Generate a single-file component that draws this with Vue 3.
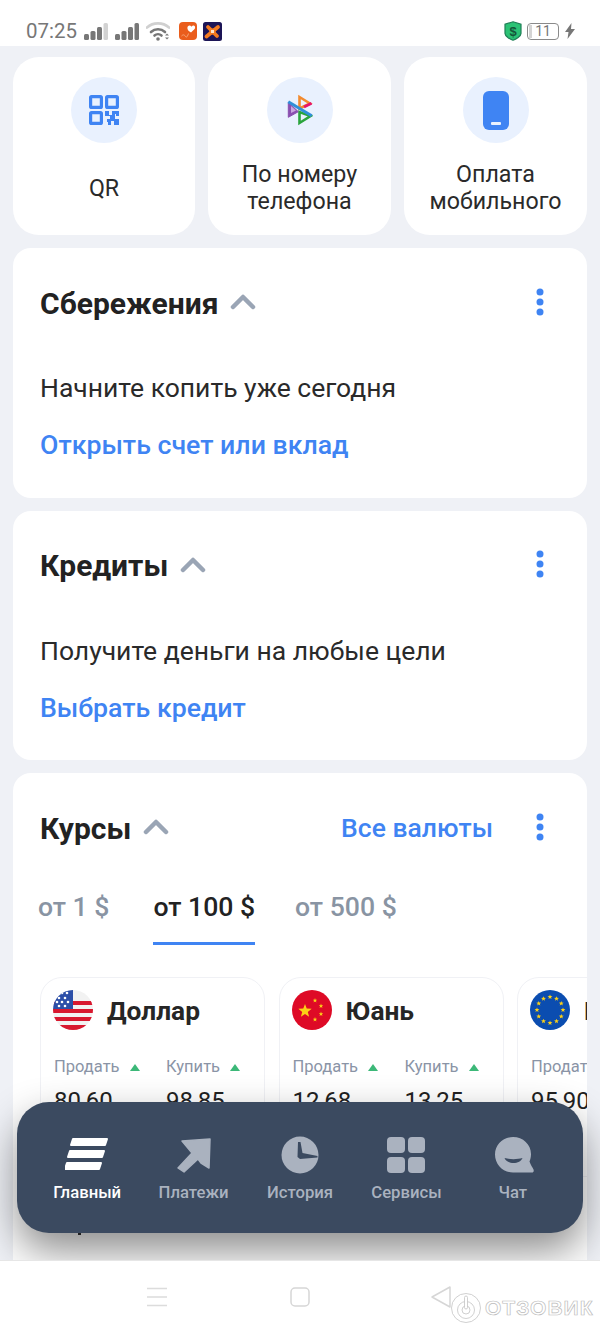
<script setup>
const star = (cx, cy, r) => {
  const pts = []
  for (let i = 0; i < 10; i++) {
    const a = -Math.PI / 2 + (i * Math.PI) / 5
    const q = i % 2 ? r * 0.42 : r
    pts.push(`${(cx + q * Math.cos(a)).toFixed(2)},${(cy + q * Math.sin(a)).toFixed(2)}`)
  }
  return pts.join(' ')
}
const euStars = Array.from({ length: 12 }, (_, i) => {
  const a = (i * Math.PI) / 6
  return star(20 + 13 * Math.cos(a), 20 + 13 * Math.sin(a), 2.6)
})
const cnStars = [star(13, 21, 7), star(23, 10.5, 2.4), star(29, 16, 2.4), star(29, 24, 2.4), star(23, 29.5, 2.4)]
const usStars = [[4, 5], [9, 3], [14, 3], [6, 8], [12, 8], [4, 12], [9, 12], [15, 12], [6, 16], [12, 16]]

const promos = [
  { title: 'Сбережения', text: 'Начните копить уже сегодня', link: 'Открыть счет или вклад' },
  { title: 'Кредиты', text: 'Получите деньги на любые цели', link: 'Выбрать кредит' }
]
const tabs = [
  { label: 'от 1 $' },
  { label: 'от 100 $', active: true },
  { label: 'от 500 $' }
]
const rates = [
  { key: 'us', name: 'Доллар', sell: '80,60', buy: '98,85' },
  { key: 'cn', name: 'Юань', sell: '12,68', buy: '13,25' },
  { key: 'eu', name: 'Евро', sell: '95,90', buy: '104,20' }
]
const navItems = [
  { key: 'home', label: 'Главный', active: true },
  { key: 'pay', label: 'Платежи' },
  { key: 'hist', label: 'История' },
  { key: 'serv', label: 'Сервисы' },
  { key: 'chat', label: 'Чат' }
]
</script>

<template>
  <div class="phone">
    <header class="status">
      <span class="time">07:25</span>
      <svg class="sig" width="24" height="18" viewBox="0 0 24 18">
        <rect x="0" y="12" width="5" height="6" rx="1.5" fill="#777" />
        <rect x="6.5" y="9" width="5" height="9" rx="1.5" fill="#777" />
        <rect x="13" y="5" width="5" height="13" rx="1.5" fill="#777" />
        <rect x="19.5" y="1" width="4.5" height="17" rx="1.5" fill="#d2d2d2" />
      </svg>
      <svg class="sig2" width="24" height="18" viewBox="0 0 24 18">
        <rect x="0" y="12" width="5" height="6" rx="1.5" fill="#777" />
        <rect x="6.5" y="9" width="5" height="9" rx="1.5" fill="#777" />
        <rect x="13" y="5" width="5" height="13" rx="1.5" fill="#777" />
        <rect x="19.5" y="1" width="4.5" height="17" rx="1.5" fill="#777" />
      </svg>
      <svg class="wifi" width="24" height="20" viewBox="0 0 24 20" fill="none">
        <path d="M1 6.5C7 1 17 1 23 6.5" stroke="#d0d0d0" stroke-width="2.6" stroke-linecap="round" />
        <path d="M5 11C9 7.3 15 7.3 19 11" stroke="#777" stroke-width="2.6" stroke-linecap="round" />
        <path d="M8.5 14.5C10.5 12.8 13.5 12.8 15.5 14.5" stroke="#777" stroke-width="2.6" stroke-linecap="round" />
        <circle cx="12" cy="18" r="1.8" fill="#777" />
        <path d="M19 14.5l2-2 2 2zM19 16.5l2 2 2-2z" fill="#777" />
      </svg>
      <svg class="app1" width="18" height="18" viewBox="0 0 18 18">
        <rect width="18" height="18" rx="4" fill="#ea5d1c" />
        <path d="M10.5 9.5C7.500 7.500 8 3.500 10.500 3.500c1 0 1.500.7 2 1.200.5-.5 1-1.200 2-1.200 2 0 2.500 3.500-.5 5l-2 2z" fill="#fff" />
        <path d="M2.500 14c2-2 3-1 4 .5s2 0 3-3" stroke="#f8b48c" stroke-width=".8" fill="none" />
      </svg>
      <svg class="app2" width="19" height="19" viewBox="0 0 19 19">
        <rect width="19" height="19" rx="2.500" fill="#1c1556" />
        <path d="M3.500 14.500L15 5M5 5l9 9" stroke="#f47b20" stroke-width="3.800" stroke-linecap="round" />
        <rect x="6.500" y="6.500" width="6" height="6" rx="1" fill="#f47b20" />
        <rect x="8" y="8" width="3" height="3" fill="#fde3c8" />
      </svg>
      <span class="grow"></span>
      <svg class="shield" width="18" height="20" viewBox="0 0 18 20">
        <path d="M9 .8l8 2.400v9.300c0 2.500-5 5.700-8 6.700-3-1-8-4.200-8-6.700V3.200z" fill="#2bc275" stroke="#1f7f56" stroke-width="1.200" />
        <text x="9" y="14.500" text-anchor="middle" class="shield-t">$</text>
      </svg>
      <span class="batt"><span class="batt-fill"></span>11</span>
      <svg class="bolt" width="10" height="16" viewBox="0 0 10 16">
        <path d="M6.500 0L0 9h3.500L2.500 16 10 6H6z" fill="#777" />
      </svg>
    </header>

    <main class="content">
      <section class="quick">
        <div class="q-card">
          <span class="q-circle">
            <svg width="30" height="30" viewBox="0 0 30 30" fill="none">
              <g stroke="#3f84f3" stroke-width="3.200">
                <rect x="1.600" y="1.600" width="10.800" height="10.800" rx="1" />
                <rect x="17.600" y="1.600" width="10.800" height="10.800" rx="1" />
                <rect x="1.600" y="17.600" width="10.800" height="10.800" rx="1" />
              </g>
              <path d="M16 16h4v4h3v-4h7v5h-3v-2h-1v5h4v6h-5v-4h-3v4h-3v-3h-1v-3h3v-3h-5z" fill="#3f84f3" />
            </svg>
          </span>
          <span class="q-label">QR</span>
        </div>
        <div class="q-card">
          <span class="q-circle">
            <svg width="26" height="32" viewBox="0 0 26 32" fill="none">
              <path d="M12.500 3L23 9.500 12.500 14.500z" stroke="#f28a2e" stroke-width="2.600" />
              <path d="M24.500 9.300L17 13" stroke="#e6136b" stroke-width="2.800" />
              <path d="M12.500 29L23.500 22 12.500 18z" stroke="#2aa43c" stroke-width="2.600" />
              <path d="M1.300 8.300v15l10-5.600z" fill="#8a4fb0" stroke="#8a4fb0" stroke-width="1" />
              <path d="M4 12v7l5-2.500z" fill="#c9a7e0" />
              <path d="M1.300 7.700l23.400 14" stroke="#2f8fd8" stroke-width="3" />
            </svg>
          </span>
          <span class="q-label">По номеру<br />телефона</span>
        </div>
        <div class="q-card">
          <span class="q-circle">
            <svg width="26" height="39" viewBox="0 0 26 39">
              <rect width="26" height="39" rx="6" fill="#3f84f3" />
              <rect x="8" y="31" width="10" height="3" rx="1" fill="#e9f1fe" />
            </svg>
          </span>
          <span class="q-label">Оплата<br />мобильного</span>
        </div>
      </section>

      <section v-for="p in promos" :key="p.title" class="card">
        <div class="head">
          <h2 class="title">{{ p.title }}</h2>
          <svg class="chev" width="26" height="18" viewBox="0 0 26 18" fill="none">
            <path d="M3 15L13 5l10 10" stroke="#9aa5b5" stroke-width="4.500" stroke-linecap="round" stroke-linejoin="round" />
          </svg>
          <span class="grow"></span>
          <svg class="dots" width="24" height="30" viewBox="0 0 24 30">
            <circle cx="12" cy="5" r="3.500" />
            <circle cx="12" cy="15" r="3.500" />
            <circle cx="12" cy="25" r="3.500" />
          </svg>
        </div>
        <p class="text">{{ p.text }}</p>
        <a class="link">{{ p.link }}</a>
      </section>

      <section class="card rates-card">
        <div class="head">
          <h2 class="title">Курсы</h2>
          <svg class="chev" width="26" height="18" viewBox="0 0 26 18" fill="none">
            <path d="M3 15L13 5l10 10" stroke="#9aa5b5" stroke-width="4.500" stroke-linecap="round" stroke-linejoin="round" />
          </svg>
          <span class="grow"></span>
          <a class="all">Все валюты</a>
          <svg class="dots" width="24" height="30" viewBox="0 0 24 30">
            <circle cx="12" cy="5" r="3.500" />
            <circle cx="12" cy="15" r="3.500" />
            <circle cx="12" cy="25" r="3.500" />
          </svg>
        </div>
        <div class="tabs">
          <span v-for="t in tabs" :key="t.label" class="tab" :class="{ on: t.active }">{{ t.label }}</span>
        </div>
        <div class="rates">
          <div v-for="r in rates" :key="r.key" class="rate">
            <div class="rate-top">
              <svg class="flag" width="40" height="40" viewBox="0 0 40 40">
                <template v-if="r.key === 'us'">
                  <rect width="40" height="40" fill="#f2f2f2" />
                  <rect y="11" width="40" height="4" fill="#d8182f" />
                  <rect y="19" width="40" height="4" fill="#d8182f" />
                  <rect y="27" width="40" height="4" fill="#d8182f" />
                  <rect y="35" width="40" height="5" fill="#d8182f" />
                  <rect width="20" height="19" fill="#2c4fa8" />
                  <circle v-for="(s, i) in usStars" :key="i" :cx="s[0]" :cy="s[1]" r="1.300" fill="#fff" />
                </template>
                <template v-else-if="r.key === 'cn'">
                  <rect width="40" height="40" fill="#de0a26" />
                  <polygon v-for="(s, i) in cnStars" :key="i" :points="s" fill="#fcd116" />
                </template>
                <template v-else>
                  <rect width="40" height="40" fill="#0b4db0" />
                  <polygon v-for="(s, i) in euStars" :key="i" :points="s" fill="#fcd116" />
                </template>
              </svg>
              <span class="rate-name">{{ r.name }}</span>
            </div>
            <div class="rate-cols">
              <div class="col">
                <span class="lbl">Продать<i class="up"></i></span>
                <span class="val">{{ r.sell }}</span>
              </div>
              <div class="col">
                <span class="lbl">Купить<i class="up"></i></span>
                <span class="val">{{ r.buy }}</span>
              </div>
            </div>
          </div>
        </div>
        <span class="tick"></span>
      </section>
    </main>

    <footer class="sysbar">
      <svg width="20" height="20" viewBox="0 0 20 20" stroke="#dcdcdc" stroke-width="1.500">
        <path d="M0 1.500h20M0 10h20M0 18.500h20" />
      </svg>
      <svg width="20" height="20" viewBox="0 0 20 20" fill="none" stroke="#d6d6d6" stroke-width="1.500">
        <rect x="1" y="1" width="18" height="18" rx="4" />
      </svg>
      <svg class="back" width="20" height="22" viewBox="0 0 20 22" fill="none" stroke="#d6d6d6" stroke-width="1.500" stroke-linejoin="round">
        <path d="M19 1v20L1 11z" />
      </svg>
    </footer>

    <nav class="nav">
      <div v-for="n in navItems" :key="n.key" class="nav-item" :class="{ on: n.active }">
        <svg class="nav-ico" width="44" height="38" viewBox="0 0 44 38">
          <g v-if="n.key === 'home'" fill="#fff" stroke="#fff" stroke-width="2" stroke-linejoin="round">
            <path d="M12 3h34l-2 6H10z" transform="translate(-4 0)" />
            <path d="M9 15h34l-2 6H7z" transform="translate(-4 0)" />
            <path d="M6 27h34l-2 6H4z" transform="translate(-4 0)" />
          </g>
          <path v-else-if="n.key === 'pay'" d="M10 5L38 3l-1 29-8-5-3-4L12 36 6 32 20 17z" fill="#aab2bf" stroke="#aab2bf" stroke-width="1.500" stroke-linejoin="round" />
          <g v-else-if="n.key === 'hist'">
            <circle cx="22" cy="19" r="18.500" fill="#aab2bf" />
            <path d="M20 6h2.500l2 11 15 3v1.500L22 23l-2.500-2z" fill="#3b4a60" />
          </g>
          <g v-else-if="n.key === 'serv'" fill="#aab2bf">
            <rect x="3" y="1" width="18" height="16" rx="4" />
            <rect x="24" y="1" width="17" height="16" rx="4" />
            <rect x="3" y="21" width="18" height="16" rx="4" />
            <rect x="24" y="21" width="17" height="16" rx="4" />
          </g>
          <g v-else>
            <path d="M22 1c10 0 18 7.500 18 17 0 3-.7 5.500-1.500 7.500 1 3 3 6 4 8 .6 1.500 0 3-1.500 3H22C12 36.500 4 28.500 4 18.500S12 1 22 1z" fill="#aab2bf" />
            <path d="M13.500 22c5 1.500 13 1.500 18 0-1 3-5 5-9 5s-8-2-9-5z" fill="#3b4a60" />
          </g>
        </svg>
        <span class="nav-lbl">{{ n.label }}</span>
      </div>
    </nav>

    <div class="mark">
      <svg width="30" height="30" viewBox="0 0 30 30" fill="none" stroke="#c4c4c4" stroke-width=".8">
        <circle cx="15" cy="15" r="14.500" />
        <circle cx="15" cy="17" r="8.500" />
        <circle cx="15" cy="17" r="4" />
        <rect x="13.500" y="3" width="3" height="13" rx="1.500" fill="#fff" />
      </svg>
      <span class="mark-t">ОТЗОВИК</span>
    </div>
  </div>
</template>

<style scoped>
.phone {
  position: relative;
  width: 600px;
  height: 1333px;
  overflow: hidden;
  display: flex;
  flex-direction: column;
  background: #eff1f6;
  font-family: Roboto, "Noto Sans", sans-serif;
  color: #222;
}
.grow { flex: 1; }

.status {
  flex: none;
  height: 46px;
  background: #fff;
  display: flex;
  align-items: center;
  padding: 16px 25px 0 26px;
  box-sizing: border-box;
}
.time { font-size: 20.5px; color: #777; width: 50px; line-height: 1; margin-right: 8px; }
.sig { margin-right: 7px; }
.sig2 { margin-right: 7px; }
.wifi { margin-right: 9px; }
.app1 { margin-right: 6px; }
.shield { margin-right: 5px; }
.shield-t { font: 700 13px "Liberation Sans", sans-serif; fill: #14563a; }
.batt {
  position: relative;
  width: 32px;
  height: 17px;
  box-sizing: border-box;
  border: 1.500px solid #8a8a8a;
  border-radius: 4px;
  font-size: 14px;
  line-height: 14px;
  color: #777;
  text-align: center;
  margin-right: 6px;
}
.batt-fill {
  position: absolute;
  left: 1px;
  top: 1px;
  bottom: 1px;
  width: 3px;
  background: #d4d4d4;
}
.content {
  flex: 1;
  min-height: 0;
  overflow: hidden;
  padding: 11px 13px 0;
  display: flex;
  flex-direction: column;
  gap: 13px;
}
.quick {
  flex: none;
  display: grid;
  grid-template-columns: 182px 183px 183px;
  gap: 13px;
}
.q-card {
  height: 178px;
  background: #fff;
  border-radius: 26px;
  display: flex;
  flex-direction: column;
  align-items: center;
  padding-top: 20px;
  box-sizing: border-box;
}
.q-circle {
  flex: none;
  width: 66px;
  height: 66px;
  border-radius: 50%;
  background: #e9f1fe;
  display: flex;
  align-items: center;
  justify-content: center;
}
.q-label {
  flex: 1;
  display: flex;
  align-items: center;
  text-align: center;
  font-size: 23.2px;
  line-height: 27px;
  color: #2a2a2a;
  padding-bottom: 2px;
}
.card {
  flex: none;
  background: #fff;
  border-radius: 18px;
  padding: 0 35px 36.5px 27px;
  display: flex;
  flex-direction: column;
}
.head {
  height: 108px;
  flex: none;
  display: flex;
  align-items: center;
}
.title {
  margin: 0;
  padding-top: 3px;
  font-size: 30px;
  line-height: 34px;
  font-weight: 700;
  color: #222;
}
.chev { margin: -2px 0 0 12px; }
.dots { fill: #3f84f3; margin-bottom: 1px; }
.text {
  margin: 16px 0 0;
  font-size: 26.5px;
  line-height: 32px;
  color: #2a2a2a;
}
.link {
  margin-top: 25px;
  font-size: 26.7px;
  line-height: 32px;
  font-weight: 500;
  color: #3f84f3;
}
.rates-card {
  padding-right: 0;
  padding-bottom: 0;
}
.rates-card .head { padding-right: 35px; }
.all {
  font-size: 26.5px;
  font-weight: 500;
  color: #3f84f3;
  margin-right: 35px;
}
.tabs {
  display: flex;
  gap: 40px;
  margin-left: -2px;
  height: 64px;
  padding-top: 10px;
  box-sizing: border-box;
}
.tab {
  height: 54px;
  box-sizing: border-box;
  font-size: 26.6px;
  line-height: 32px;
  font-weight: 500;
  color: #8994a3;
  white-space: nowrap;
}
.tab:first-child { margin-right: 4px; }
.tab.on {
  color: #222;
  border-bottom: 3px solid #3f84f3;
}
.rates {
  margin-top: 32px;
  display: flex;
  gap: 13.5px;
  overflow: hidden;
  flex: none;
}
.rate {
  flex: none;
  width: 225px;
  height: 200px;
  box-sizing: border-box;
  border: 1.500px solid #f0f1f5;
  border-radius: 22px;
  padding: 12px 12px 0;
}
.rate-top {
  display: flex;
  align-items: center;
  gap: 14px;
}
.flag {
  flex: none;
  border-radius: 50%;
}
.rate-name {
  padding-top: 2px;
  font-size: 26.3px;
  font-weight: 700;
  color: #262626;
  white-space: nowrap;
}
.rate-cols {
  display: flex;
  margin-top: 26px;
  padding-left: 1px;
}
.col {
  width: 112px;
  flex: none;
  display: flex;
  flex-direction: column;
}
.lbl {
  display: flex;
  align-items: center;
  gap: 10px;
  font-size: 16.5px;
  line-height: 22px;
  color: #8a94a6;
  white-space: nowrap;
}
.up {
  width: 0;
  height: 0;
  border-left: 5px solid transparent;
  border-right: 5px solid transparent;
  border-bottom: 7px solid #3cb878;
}
.val {
  margin-top: 8px;
  font-size: 24px;
  line-height: 30px;
  color: #222;
}
.tick {
  flex: none;
  display: block;
  width: 3px;
  height: 2px;
  background: #333;
  margin: 56px 0 60px 38px;
}
.sysbar {
  position: relative;
  z-index: 2;
  flex: none;
  height: 73px;
  box-sizing: border-box;
  border-top: 1px solid #e6e6e6;
  background: #fff;
  display: flex;
  align-items: center;
  padding-left: 147px;
  gap: 123px;
}
.back { margin-left: -2px; }
.nav {
  position: absolute;
  z-index: 1;
  left: 17px;
  top: 1102px;
  width: 566px;
  height: 131px;
  box-sizing: border-box;
  padding: 0 17px;
  background: #3b4a60;
  border-radius: 32px;
  box-shadow: 0 18px 40px rgba(0, 0, 0, 0.45);
  display: flex;
  align-items: flex-start;
}
.nav-item {
  flex: 1;
  display: flex;
  flex-direction: column;
  align-items: center;
  padding-top: 34px;
  color: #aab2bf;
}
.nav-item.on { color: #fff; }
.nav-lbl {
  margin-top: 10px;
  font-size: 16.7px;
  line-height: 18px;
  font-weight: 500;
  white-space: nowrap;
}
.mark {
  position: absolute;
  z-index: 3;
  left: 451px;
  top: 1293px;
  display: flex;
  align-items: center;
  gap: 4px;
}
.mark-t {
  font-family: "Liberation Sans", sans-serif;
  font-size: 21px;
  font-weight: 700;
  letter-spacing: 1px;
  color: #fff;
  -webkit-text-stroke: 0.7px #bcbcbc;
  white-space: nowrap;
}
</style>
